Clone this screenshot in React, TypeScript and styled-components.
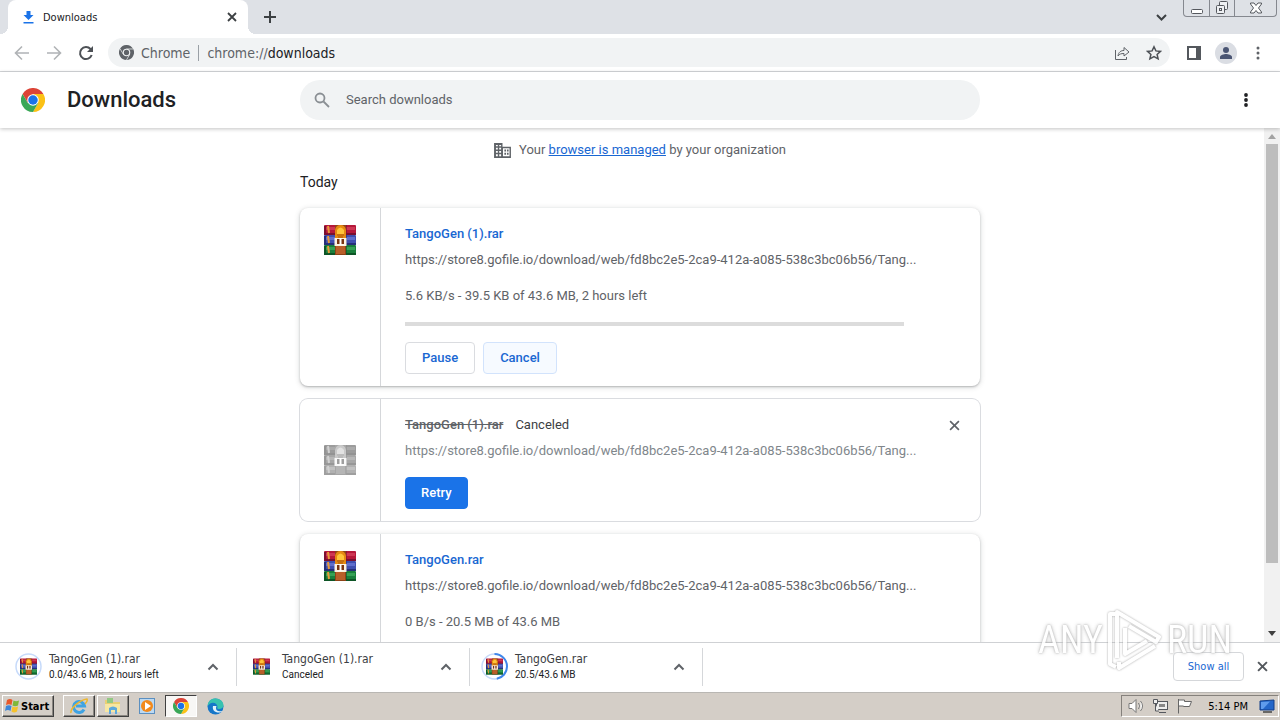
import React from 'react';
import styled, { createGlobalStyle, css } from 'styled-components';

const UI_FONT = '"DejaVu Sans Condensed", "DejaVu Sans", sans-serif';
const PAGE_FONT = 'Roboto, "Liberation Sans", sans-serif';

const GlobalStyle = createGlobalStyle`
  *, *::before, *::after { box-sizing: border-box; }
  body { margin: 0; background: #fff; font-family: ${PAGE_FONT}; font-size: 13px; color: #202124; }
  button, input { font: inherit; color: inherit; }
  button { padding: 0; border: 0; background: none; }
  h1, h2, p { margin: 0; font-weight: 400; }
  svg { display: block; flex: none; }
`;

const Screen = styled.div`
  display: flex;
  flex-direction: column;
  height: 100vh;
  overflow: hidden;
  position: relative;
`;

/* ---------- tab strip ---------- */

const TabStrip = styled.header`
  display: flex;
  flex: none;
  height: 34px;
  padding-left: 8px;
  background: #dee1e6;
  font-family: ${UI_FONT};
`;

const Tab = styled.div`
  position: relative;
  display: flex;
  align-items: center;
  gap: 8px;
  width: 240px;
  padding: 0 8px 0 14px;
  background: #fff;
  border-radius: 8px 8px 0 0;
  font-size: 11px;
  &::before, &::after {
    content: '';
    position: absolute;
    bottom: 0;
    width: 8px;
    height: 8px;
  }
  &::before { right: 100%; background: radial-gradient(circle at 0 0, transparent 8px, #fff 8px); }
  &::after { left: 100%; background: radial-gradient(circle at 100% 0, transparent 8px, #fff 8px); }
`;

const TabTitle = styled.span`
  flex: 1;
`;

const IconButton = styled.button<{ $size?: number }>`
  display: flex;
  flex: none;
  align-items: center;
  justify-content: center;
  width: ${(p) => p.$size ?? 16}px;
  height: ${(p) => p.$size ?? 16}px;
`;

const StripActions = styled.div`
  display: flex;
  flex: 1;
  align-items: center;
  justify-content: space-between;
  padding: 0 14px;
`;

const WindowControls = styled.div`
  display: flex;
  align-self: flex-start;
  height: 17px;
  margin-right: 3px;
  border: 1px solid #85888f;
  border-top: 0;
  border-radius: 0 0 4px 4px;
`;

const WindowButton = styled.button<{ $wide?: boolean }>`
  display: flex;
  align-items: center;
  justify-content: center;
  width: ${(p) => (p.$wide ? 42 : 25)}px;
  & + & { border-left: 1px solid #85888f; }
`;

/* ---------- toolbar ---------- */

const Toolbar = styled.div`
  display: flex;
  flex: none;
  align-items: center;
  height: 38px;
  padding: 0 14px;
  gap: 16px;
  border-bottom: 1px solid #d5d7da;
  font-family: ${UI_FONT};
`;

const AddressBar = styled.div`
  display: flex;
  flex: 1;
  align-items: center;
  height: 29px;
  margin: 0 0 0 -2px;
  padding: 0 8px 0 11px;
  border-radius: 15px;
  background: #f1f3f4;
  font-size: 14px;
  color: #5f6368;
`;

const SiteChip = styled.span`
  margin-left: 7px;
  padding-right: 8px;
  border-right: 1px solid #9aa0a6;
  line-height: 16px;
`;

const Address = styled.span`
  flex: 1;
  padding-left: 8px;
  line-height: 16px;
  b { font-weight: 400; color: #202124; }
`;

const AddressActions = styled.div`
  display: flex;
  gap: 16px;
`;

const Avatar = styled.button`
  display: flex;
  align-items: center;
  justify-content: center;
  width: 22px;
  height: 22px;
  margin: 0 -3px;
  border-radius: 50%;
  background: #dadde3;
`;

/* ---------- downloads page ---------- */

const PageHeader = styled.div`
  position: relative;
  z-index: 1;
  display: grid;
  flex: none;
  grid-template-columns: minmax(180px, 1fr) minmax(0, 680px) minmax(40px, 1fr);
  align-items: center;
  height: 56px;
  background: #fff;
  box-shadow: 0 1px 4px rgba(0, 0, 0, 0.24);
`;

const Brand = styled.div`
  display: flex;
  align-items: center;
  gap: 22px;
  padding-left: 21px;
  h1 { font-size: 22px; font-weight: 500; line-height: 28px; }
`;

const SearchBox = styled.label`
  display: flex;
  align-items: center;
  gap: 16px;
  height: 40px;
  padding: 0 14px;
  border-radius: 20px;
  background: #f1f3f4;
  input {
    flex: 1;
    min-width: 0;
    padding: 0 0 2px;
    border: 0;
    outline: 0;
    background: none;
  }
  input::placeholder { color: #5f6368; opacity: 1; }
`;

const HeaderMenu = styled(IconButton)`
  justify-self: end;
  margin-right: 26px;
`;

const Content = styled.main`
  position: relative;
  flex: 1;
  min-height: 0;
  overflow: hidden;
`;

const Column = styled.div`
  max-width: 680px;
  margin: 0 auto;
  padding-top: 12px;
`;

const ManagedNote = styled.p`
  display: flex;
  align-items: center;
  justify-content: center;
  gap: 8px;
  line-height: 20px;
  color: #5f6368;
  a { color: #1967d2; }
`;

const DateHeading = styled.h2`
  margin: 12px 0 16px;
  font-size: 14px;
  line-height: 20px;
`;

const DownloadList = styled.div`
  display: flex;
  flex-direction: column;
  gap: 13px;
`;

const Card = styled.article<{ $active?: boolean }>`
  display: flex;
  border-radius: 8px;
  background: #fff;
  box-shadow: ${(p) =>
    p.$active
      ? '0 1px 2px rgba(60, 64, 67, 0.3), 0 1px 5px 1px rgba(60, 64, 67, 0.15)'
      : '0 0 0 1px #dadce0'};
`;

const FileCell = styled.div<{ $dim?: boolean }>`
  display: flex;
  flex: none;
  justify-content: center;
  align-items: ${(p) => (p.$dim ? 'center' : 'flex-start')};
  width: 81px;
  padding: 16px 0;
  border-right: 1px solid #d5d7da;
  svg { filter: ${(p) => (p.$dim ? 'grayscale(1)' : 'none')}; opacity: ${(p) => (p.$dim ? 0.5 : 1)}; }
`;

const Details = styled.div`
  display: flex;
  flex: 1;
  flex-direction: column;
  gap: 16px;
  min-width: 0;
  padding: 16px 0 12px 24px;
  color: #5f6368;
  line-height: 20px;
`;

const Identity = styled.div`
  display: flex;
  flex-direction: column;
  gap: 6px;
`;

const NameRow = styled.div`
  display: flex;
  gap: 12px;
  a { font-weight: 500; color: #1967d2; text-decoration: none; }
  s { font-weight: 500; }
  span { color: #3c4043; }
`;

const Url = styled.p<{ $dim?: boolean }>`
  white-space: nowrap;
  color: ${(p) => (p.$dim ? '#80868b' : '#5f6368')};
`;

const Progress = styled.div`
  height: 4px;
  background: #dcdcdc;
`;

const Actions = styled.div`
  display: flex;
  gap: 8px;
`;

const ActionButton = styled.button<{ $kind?: 'hover' | 'primary' }>`
  height: 32px;
  padding: 0 ${(p) => (p.$kind === 'primary' ? 15 : 16)}px;
  border: 1px solid ${(p) => (p.$kind === 'primary' ? '#1a73e8' : p.$kind === 'hover' ? '#d2e3fc' : '#dadce0')};
  border-radius: 4px;
  background: ${(p) => (p.$kind === 'primary' ? '#1a73e8' : p.$kind === 'hover' ? '#f6faff' : '#fff')};
  color: ${(p) => (p.$kind === 'primary' ? '#fff' : '#1967d2')};
  font-weight: 500;
`;

const RemoveCell = styled.div`
  flex: none;
  width: 76px;
  padding: 18px;
  display: flex;
  justify-content: flex-end;
`;

const ScrollBar = styled.div`
  position: absolute;
  top: 0;
  right: 0;
  bottom: 0;
  display: flex;
  flex-direction: column;
  align-items: center;
  justify-content: space-between;
  width: 16px;
  padding: 6px 0;
  background: #f1f1f1;
`;

const ScrollTrack = styled.div`
  flex: 1;
  width: 12px;
  margin: 5px 0;
`;

const ScrollThumb = styled.div`
  height: 87%;
  background: #bdbdbd;
`;

/* ---------- download shelf ---------- */

const Shelf = styled.section`
  display: flex;
  flex: none;
  align-items: center;
  height: 50px;
  padding: 0 10px 2px 4px;
  border-top: 1px solid #cfd1d4;
  background: #fff;
  font-family: ${UI_FONT};
`;

const ShelfItem = styled.div`
  display: flex;
  align-items: center;
  gap: 7px;
  width: 233px;
  height: 38px;
  padding: 0 15px 0 11px;
  border-right: 1px solid #d5d7da;
`;

const ShelfText = styled.div`
  flex: 1;
  min-width: 0;
  white-space: nowrap;
  p { font-size: 12px; line-height: 16px; color: #3c4043; }
  small { display: block; font-family: ${PAGE_FONT}; font-size: 10px; line-height: 16px; }
`;

const ShelfEnd = styled.div`
  display: flex;
  align-items: center;
  gap: 10px;
  margin-left: auto;
`;

const ShowAll = styled.button`
  width: 71px;
  height: 29px;
  border: 1px solid #d5d7da;
  border-radius: 4px;
  background: #fff;
  font-size: 11px;
  color: #1967d2;
`;

/* ---------- task bar ---------- */

const TaskBar = styled.footer`
  display: flex;
  flex: none;
  align-items: center;
  height: 28px;
  padding: 0 1px 1px 2px;
  border-top: 1px solid #b9b7b3;
  background: #d4cec7;
  font-family: ${UI_FONT};
  font-size: 11px;
  color: #000;
`;

const raised = css`
  border: 1px solid;
  border-color: #fff #404040 #404040 #fff;
  box-shadow: inset -1px -1px 0 #8a8681;
`;

const StartButton = styled.button`
  display: flex;
  align-items: center;
  gap: 1px;
  width: 52px;
  height: 22px;
  padding-left: 2px;
  margin-right: 9px;
  font-weight: 700;
  ${raised}
`;

const TaskButton = styled.button<{ $look?: 'raised' | 'pressed' }>`
  display: flex;
  align-items: center;
  justify-content: center;
  width: 32px;
  height: 22px;
  margin-right: 2px;
  ${(p) => p.$look === 'raised' && raised}
  ${(p) =>
    p.$look === 'pressed' &&
    css`
      border: 1px solid;
      border-color: #404040 #fff #fff #404040;
      background: #f8f7f5;
    `}
`;

const Tray = styled.div`
  display: flex;
  align-items: center;
  gap: 7px;
  height: 22px;
  margin-left: auto;
  padding: 0 2px 0 6px;
  border: 1px solid;
  border-color: #85817c #fff #fff #85817c;
  time { margin: 0 4px 0 8px; }
`;

const Watermark = styled.div`
  position: absolute;
  right: 48px;
  bottom: 48px;
  z-index: 3;
  display: flex;
  align-items: center;
  gap: 4px;
  opacity: 0.85;
  pointer-events: none;
  color: #fff;
  font-family: "Liberation Sans Narrow", "Roboto Condensed", "Liberation Sans", sans-serif;
  font-size: 38px;
  line-height: 40px;
  text-shadow: 0 0 2px #a0a0a0, 0 0 4px #bbb;
  svg { filter: drop-shadow(0 0 1px #999); }
`;

/* ---------- drawings ---------- */

const Cross = ({ size = 10, color = '#3c4043', weight = 2 }: { size?: number; color?: string; weight?: number }) => (
  <svg width={size} height={size} viewBox="0 0 10 10" stroke={color} strokeWidth={weight} fill="none">
    <path d="M1 1l8 8M9 1l-8 8" />
  </svg>
);

const Dots = ({ color = '#5f6368' }: { color?: string }) => (
  <svg width="16" height="16" viewBox="0 0 16 16" fill={color}>
    <circle cx="8" cy="3" r="1.900" /><circle cx="8" cy="8" r="1.900" /><circle cx="8" cy="13" r="1.900" />
  </svg>
);

const ChromeLogo = ({ size = 24, mono = false }: { size?: number; mono?: boolean }) => {
  const c = mono ? ['#5f6368', '#5f6368', '#5f6368', '#5f6368'] : ['#dc4437', '#fbc116', '#3aa757', '#1a73e8'];
  return (
    <svg width={size} height={size} viewBox="0 0 48 48">
      <path d="M24 12h20.8A24 24 0 0 0 3.2 12l10.4 18z" fill={c[0]} />
      <path d="M34.4 30L24 48A24 24 0 0 0 44.8 12H24z" fill={c[1]} />
      <path d="M13.6 30L3.2 12A24 24 0 0 0 24 48l10.4-18z" fill={c[2]} />
      {mono && <path d="M24 13h21M14 30L3.500 12M34 30L24 48" stroke="#f1f3f4" strokeWidth="2" />}
      <circle cx="24" cy="24" r={mono ? 12 : 11.5} fill={mono ? '#f1f3f4' : '#fff'} />
      <circle cx="24" cy="24" r={mono ? 8.5 : 9.5} fill={c[3]} />
    </svg>
  );
};

const BOOKS = [
  { y: 1, base: '#b5183a', light: '#dc4863', dark: '#7a1030' },
  { y: 11, base: '#3f4fae', light: '#7080dc', dark: '#262f78' },
  { y: 21, base: '#1a7f3c', light: '#45b463', dark: '#0d5526' },
];

const RarIcon = ({ size = 32 }: { size?: number }) => (
  <svg width={size} height={size} viewBox="0 0 32 32">
    {BOOKS.map((b) => (
      <g key={b.y}>
        <rect x="0" y={b.y} width="32" height="10" rx="1" fill={b.base} />
        <rect x="1" y={b.y + 2} width="30" height="3" fill={b.light} opacity="0.65" />
        <rect x="0" y={b.y + 8} width="32" height="2" fill={b.dark} />
        <rect x="0" y={b.y + 1} width="2" height="8" fill={b.dark} />
        <path d={`M4 ${b.y + 1}l1 7`} stroke="#e89a3a" strokeWidth="2" />
        <rect x="22" y={b.y} width="1" height="10" fill={b.dark} opacity="0.6" />
      </g>
    ))}
    <rect x="11" y="1" width="11" height="30" fill="#8f4318" />
    <rect x="12" y="22" width="9" height="8" fill="#b95f2a" />
    <path d="M11 16V6q1-5 5.500-5T22 6v10z" fill="#e58a12" />
    <path d="M13 6q3.500-5 7 0v4h-7z" fill="#ffc43a" />
    <path d="M13 11h7M14 13h5" stroke="#a8540b" strokeWidth="1" />
    <path d="M10.500 14h12v8h-12z" fill="#fdf3e2" />
    <path d="M13 15h7v5h-7z" fill="#7a3410" />
    <path d="M16.500 14v7" stroke="#fff" strokeWidth="2" />
  </svg>
);

const ShelfIcon = ({ progress }: { progress?: number }) => (
  <svg width="27" height="27" viewBox="0 0 27 27">
    {progress !== undefined && (
      <>
        <circle cx="13.500" cy="13.500" r="12.500" fill="none" stroke="#c6dafa" strokeWidth="1.500" />
        <circle
          cx="13.500" cy="13.500" r="12.500" fill="none" stroke="#3f86ea" strokeWidth="2"
          pathLength="100" strokeDasharray={`${progress} 100`} transform="rotate(-90 13.500 13.500)"
        />
      </>
    )}
    <g transform="translate(5 5)"><RarIcon size={17} /></g>
  </svg>
);

const ChevronUp = () => (
  <svg width="12" height="8" viewBox="0 0 12 8" fill="none" stroke="#5f6368" strokeWidth="2"><path d="M1.500 6.500L6 2l4.500 4.500" /></svg>
);

const PlayMark = () => (
  <svg width="56" height="64" viewBox="0 0 56 64" fill="none" stroke="#fff" strokeWidth="4" strokeLinejoin="round">
    <path d="M8 6H3v50l6 3" />
    <path d="M10 50V4l42 25-3 5-27-16" />
    <path d="M18 20v26l22-13" />
    <path d="M48 38L12 60v-6" />
  </svg>
);

/* ---------- data ---------- */

const URL_TEXT = 'https://store8.gofile.io/download/web/fd8bc2e5-2ca9-412a-a085-538c3bc06b56/Tang...';

const DOWNLOADS = [
  { name: 'TangoGen (1).rar', status: '5.6 KB/s - 39.5 KB of 43.6 MB, 2 hours left', canceled: false },
  { name: 'TangoGen (1).rar', status: '', canceled: true },
  { name: 'TangoGen.rar', status: '0 B/s - 20.5 MB of 43.6 MB', canceled: false },
];

const SHELF = [
  { name: 'TangoGen (1).rar', note: '0.0/43.6 MB, 2 hours left', progress: 0 },
  { name: 'TangoGen (1).rar', note: 'Canceled', progress: undefined },
  { name: 'TangoGen.rar', note: '20.5/43.6 MB', progress: 47 },
];

const DownloadCard = ({ name, status, canceled }: (typeof DOWNLOADS)[number]) => (
  <Card $active={!canceled}>
    <FileCell $dim={canceled}><RarIcon /></FileCell>
    <Details>
      <Identity>
        <NameRow>
          {canceled ? <><s>{name}</s><span>Canceled</span></> : <a href="#file">{name}</a>}
        </NameRow>
        <Url $dim={canceled}>{URL_TEXT}</Url>
      </Identity>
      {canceled ? (
        <Actions><ActionButton $kind="primary">Retry</ActionButton></Actions>
      ) : (
        <>
          <p>{status}</p>
          <Progress role="progressbar" aria-label={name} />
          <Actions>
            <ActionButton>Pause</ActionButton>
            <ActionButton $kind="hover">Cancel</ActionButton>
          </Actions>
        </>
      )}
    </Details>
    <RemoveCell>
      {canceled && <IconButton aria-label="Remove from list"><Cross size={11} color="#5f6368" weight={1.5} /></IconButton>}
    </RemoveCell>
  </Card>
);

export default function App() {
  return (
    <Screen>
      <GlobalStyle />
      <TabStrip>
        <Tab>
          <svg width="13" height="14" viewBox="0 0 13 14" fill="#1a73e8">
            <path d="M4.500 1h4v4h3l-5 5-5-5h3zM1.500 12h10v1.500h-10z" />
          </svg>
          <TabTitle>Downloads</TabTitle>
          <IconButton aria-label="Close tab"><Cross size={10} weight={1.8} /></IconButton>
        </Tab>
        <StripActions>
          <IconButton aria-label="New tab">
            <svg width="12" height="12" viewBox="0 0 12 12" stroke="#3c4043" strokeWidth="2"><path d="M6 0v12M0 6h12" /></svg>
          </IconButton>
          <IconButton aria-label="Search tabs">
            <svg width="11" height="7" viewBox="0 0 11 7" fill="none" stroke="#3c4043" strokeWidth="2"><path d="M1 1l4.500 4.500L10 1" /></svg>
          </IconButton>
        </StripActions>
        <WindowControls>
          <WindowButton aria-label="Minimize">
            <svg width="12" height="14" viewBox="0 0 12 14" fill="#fff" stroke="#55585e"><rect x=".5" y="8.500" width="11" height="4" rx="1" /></svg>
          </WindowButton>
          <WindowButton aria-label="Restore">
            <svg width="14" height="14" viewBox="0 0 14 14" fill="#eef0f3" stroke="#55585e">
              <rect x="4.500" y=".5" width="8" height="8" rx="1" /><rect x="1.500" y="4.500" width="8" height="8" rx="1" /><rect x="4.500" y="7.500" width="2" height="2" />
            </svg>
          </WindowButton>
          <WindowButton $wide aria-label="Close">
            <svg width="12" height="12" viewBox="0 0 12 12" fill="#fff" stroke="#55585e">
              <path d="M.5 1h3.500l2 2.500L8 1h3.500v1L8.500 6l3 4v1H8L6 8.500 4 11H.5v-1l3-4-3-4z" />
            </svg>
          </WindowButton>
        </WindowControls>
      </TabStrip>

      <Toolbar>
        <IconButton aria-label="Back">
          <svg width="16" height="16" viewBox="0 0 16 16" fill="none" stroke="#b0b3b6" strokeWidth="1.600"><path d="M15 8H2M8 1.500L1.500 8 8 14.500" /></svg>
        </IconButton>
        <IconButton aria-label="Forward">
          <svg width="16" height="16" viewBox="0 0 16 16" fill="none" stroke="#b0b3b6" strokeWidth="1.600"><path d="M1 8h13M8 1.500L14.500 8 8 14.500" /></svg>
        </IconButton>
        <IconButton aria-label="Reload">
          <svg width="16" height="16" viewBox="0 0 16 16" fill="none" stroke="#4d5156" strokeWidth="2"><path d="M13.700 10A6 6 0 1 1 12.500 4l1.500 1.500" /><path d="M15 1v6H9z" fill="#4d5156" stroke="none" /></svg>
        </IconButton>
        <AddressBar>
          <ChromeLogo size={15} mono />
          <SiteChip>Chrome</SiteChip>
          <Address>chrome://<b>downloads</b></Address>
          <AddressActions>
            <IconButton aria-label="Share">
              <svg width="16" height="16" viewBox="0 0 16 16" fill="none" stroke="#5f6368"><path d="M1.500 5v9.500h11V12M4 11c.5-4 3-5.500 6-5.500V2.500l5 4.500-5 4V8.500C7 8.500 5.500 9 4 11z" /></svg>
            </IconButton>
            <IconButton aria-label="Bookmark">
              <svg width="16" height="16" viewBox="0 0 16 16" fill="none" stroke="#4d5156" strokeWidth="1.500"><path d="M8 1.800l1.900 4.100 4.600.5-3.400 3 1 4.500L8 11.600l-4.100 2.300 1-4.500-3.400-3 4.600-.5z" /></svg>
            </IconButton>
          </AddressActions>
        </AddressBar>
        <IconButton aria-label="Side panel">
          <svg width="14" height="14" viewBox="0 0 14 14"><path d="M1 1h12v12H1z" fill="none" stroke="#54585d" strokeWidth="2" /><path d="M9 1h4v12H9z" fill="#54585d" /></svg>
        </IconButton>
        <Avatar aria-label="Profile">
          <svg width="14" height="14" viewBox="0 0 14 14" fill="#4a5573"><circle cx="7" cy="4" r="3" /><path d="M1 13v-2c0-2 4-3 6-3s6 1 6 3v2z" /></svg>
        </Avatar>
        <IconButton aria-label="Menu">
          <svg width="16" height="16" viewBox="0 0 16 16" fill="#5f6368"><circle cx="8" cy="3" r="1.500" /><circle cx="8" cy="8" r="1.500" /><circle cx="8" cy="13" r="1.500" /></svg>
        </IconButton>
      </Toolbar>

      <PageHeader>
        <Brand><ChromeLogo /><h1>Downloads</h1></Brand>
        <SearchBox>
          <svg width="16" height="16" viewBox="0 0 16 16" fill="none" stroke="#8a8f94" strokeWidth="1.800"><circle cx="6" cy="6" r="4.500" /><path d="M9.500 9.500L15 15" /></svg>
          <input type="search" placeholder="Search downloads" aria-label="Search downloads" />
        </SearchBox>
        <HeaderMenu aria-label="More actions"><Dots color="#202124" /></HeaderMenu>
      </PageHeader>

      <Content>
        <Column>
          <ManagedNote>
            <svg width="17" height="15" viewBox="0 0 18 16" fill="#5f6368">
              <path fillRule="evenodd" d="M0 0h9v4h9v12H0zM2 2v1.500h2V2zm3.500 0v1.500h2V2zM2 5v2h2V5zm3.500 0v2h2V5zM2 8.500v2h2v-2zm3.500 0v2h2v-2zM2 12v2h2v-2zm3.500 0v2h2v-2zM9.500 5.500V14h7V5.500zM11 7h1.800v2H11zm2.800 0h1.700v2h-1.700zM11 10.500h1.800v2H11zm2.800 0h1.700v2h-1.700z" />
            </svg>
            <span>Your <a href="#managed">browser is managed</a> by your organization</span>
          </ManagedNote>
          <DateHeading>Today</DateHeading>
          <DownloadList>
            {DOWNLOADS.map((d, i) => <DownloadCard key={i} {...d} />)}
          </DownloadList>
        </Column>
        <ScrollBar aria-hidden="true">
          <svg width="8" height="5" viewBox="0 0 8 5" fill="#a3a3a3"><path d="M0 5l4-5 4 5z" /></svg>
          <ScrollTrack><ScrollThumb /></ScrollTrack>
          <svg width="8" height="5" viewBox="0 0 8 5" fill="#404040"><path d="M0 0l4 5 4-5z" /></svg>
        </ScrollBar>
      </Content>

      <Shelf aria-label="Downloads bar">
        {SHELF.map((s, i) => (
          <ShelfItem key={i}>
            <ShelfIcon progress={s.progress} />
            <ShelfText><p>{s.name}</p><small>{s.note}</small></ShelfText>
            <IconButton aria-label="Options"><ChevronUp /></IconButton>
          </ShelfItem>
        ))}
        <ShelfEnd>
          <ShowAll>Show all</ShowAll>
          <IconButton aria-label="Close bar"><Cross size={11} color="#54585d" weight={1.8} /></IconButton>
        </ShelfEnd>
      </Shelf>

      <TaskBar>
        <StartButton>
          <svg width="15" height="16" viewBox="0 0 15 16">
            <path d="M2 2q3-2 5.500 0L6.500 7Q4 5.500 1 7z" fill="#e8582a" /><path d="M8.500 2.500Q11 4 14 2.500L13 7.500q-3 1.500-5.500 0z" fill="#7fb83a" />
            <path d="M1 8q3-1.500 5.500 0l-1 5q-2.500-2-5.500 0z" fill="#3c86d8" /><path d="M7.500 8.500q2.500 1.500 5.500 0l-1 5q-3 2-5.500 0z" fill="#f6c22c" />
          </svg>
          Start
        </StartButton>
        <TaskButton $look="raised" aria-label="Internet Explorer">
          <svg width="18" height="18" viewBox="0 0 18 18" fill="none">
            <path d="M14 12.500A5.500 5.500 0 1 1 14.500 9H6" stroke="#3fa3e3" strokeWidth="3" /><path d="M1 16C0 12 9 3 17 2c1 2-1 4-2 5" stroke="#edb72f" strokeWidth="1.500" />
          </svg>
        </TaskButton>
        <TaskButton $look="raised" aria-label="Explorer">
          <svg width="18" height="18" viewBox="0 0 18 18">
            <path d="M1 3h6l1 2h8v10H1z" fill="#e9cf73" /><path d="M3 1h6v5H3z" fill="#93c983" /><path d="M1 7h15v8H1z" fill="#f7e7a2" /><path d="M5 17v-6q4-3 8 0v6h-2v-4H7v4z" fill="#5da9dc" />
          </svg>
        </TaskButton>
        <TaskButton aria-label="Media Player">
          <svg width="17" height="17" viewBox="0 0 17 17"><rect x=".5" y=".5" width="15" height="15" fill="#bcd9f2" stroke="#5b8fc0" /><circle cx="8" cy="8" r="6" fill="#f28a1c" /><path d="M6 4l6 4-6 4z" fill="#fff" /></svg>
        </TaskButton>
        <TaskButton $look="pressed" aria-label="Chrome"><ChromeLogo size={16} /></TaskButton>
        <TaskButton aria-label="Edge">
          <svg width="17" height="17" viewBox="0 0 17 17">
            <circle cx="8.500" cy="8.500" r="8" fill="#1576c8" /><path d="M.6 8C1 3 4 .5 8.500.5s8 3 8 7c0 2-2 3.500-4.500 3.500-2 0-2-1-1.500-2 0-3-3-5-6-4-2 .7-3 2-3.900 3z" fill="#37c2b0" />
            <path d="M6 8c-1 4 2 7 7 6.500 1 0 2-1 2.500-1.500-3 1-8 0-6-5z" fill="#dff1fa" />
          </svg>
        </TaskButton>
        <Tray>
          <svg width="17" height="16" viewBox="0 0 17 16" fill="#fff" stroke="#777"><path d="M1 5.500h3l4-4v13l-4-4H1zM10.500 5q2 3 0 6M12.500 3q4 5 0 10" /></svg>
          <svg width="17" height="16" viewBox="0 0 17 16" fill="#eee" stroke="#55585e"><rect x="4.500" y="3.500" width="11" height="8" /><path d="M7 14.500h7M1.500 1.500h4v4h-4zM3.500 6v7H7" /><rect x="7" y="6" width="6" height="3" fill="#888" stroke="none" /></svg>
          <svg width="17" height="16" viewBox="0 0 17 16" fill="#fff" stroke="#666"><path d="M2.500 1v14.500M2.500 2h6v1.500h7l-2 5h-6V8h-5z" /></svg>
          <time>5:14 PM</time>
          <svg width="17" height="16" viewBox="0 0 17 16"><path d="M1 3l14-1v10H1z" fill="#2467c9" stroke="#123f88" /><path d="M2 4l9-.5L4 11H2z" fill="#5f9cec" /><path d="M4 14h9" stroke="#444" strokeWidth="1.500" /></svg>
        </Tray>
      </TaskBar>

      <Watermark><span>ANY</span><PlayMark /><span>RUN</span></Watermark>
    </Screen>
  );
}
